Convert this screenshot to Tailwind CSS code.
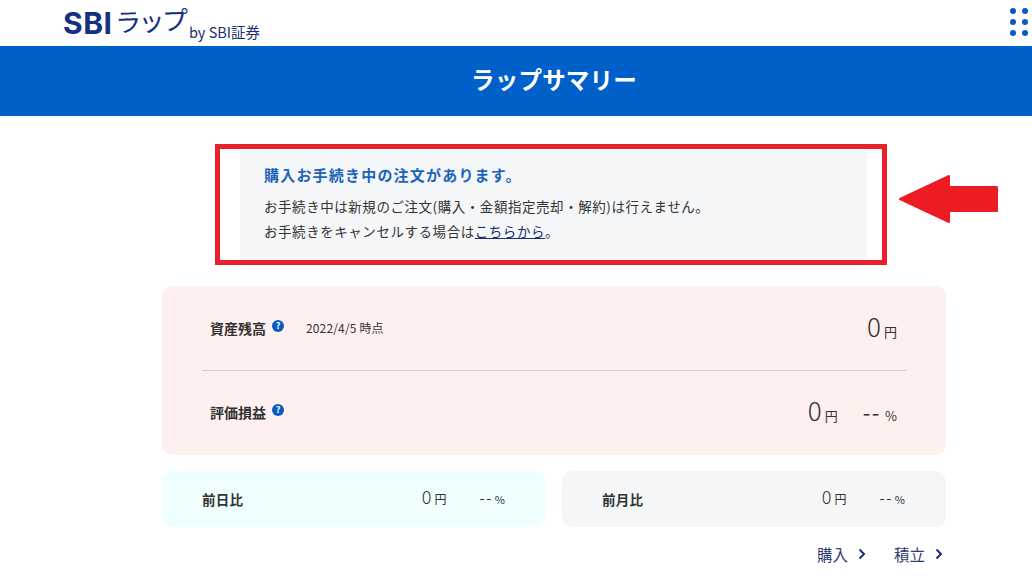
<!DOCTYPE html>
<html lang="ja">
  <head>
    <meta charset="utf-8" />
    <title>ラップサマリー</title>
    <script src="https://cdn.jsdelivr.net/npm/@tailwindcss/browser@4"></script>
  </head>
  <body class="bg-white h-[587px] overflow-hidden relative font-['Noto_Sans_CJK_JP','Noto_Sans',sans-serif] text-[#333]">
    <!-- Header -->
    <header class="h-[46px] flex items-start justify-between pl-[63px] pr-[4px]">
      <div class="flex items-end h-[39px] text-[#14307f]">
        <span class="font-['Inter',sans-serif] font-bold text-[30px] leading-[36px] tracking-[0.5px] mb-[-2px]">SBI</span>
        <span class="text-[26px] leading-[38px] ml-[3px] tracking-[-2.5px] -rotate-2">ラップ</span>
        <span class="text-[14.5px] leading-[16px] ml-[3px] mb-[-1px] text-[#1a2f6e]">by SBI証券</span>
      </div>
      <div class="grid grid-cols-2 gap-x-[6px] gap-y-[5px] pt-[8px]">
        <i class="block w-[6px] h-[6px] rounded-full bg-[#0b5ac4]"></i>
        <i class="block w-[6px] h-[6px] rounded-full bg-[#0b5ac4]"></i>
        <i class="block w-[6px] h-[6px] rounded-full bg-[#0b5ac4]"></i>
        <i class="block w-[6px] h-[6px] rounded-full bg-[#0b5ac4]"></i>
        <i class="block w-[6px] h-[6px] rounded-full bg-[#0b5ac4]"></i>
        <i class="block w-[6px] h-[6px] rounded-full bg-[#0b5ac4]"></i>
      </div>
    </header>

    <!-- Title band -->
    <div class="h-[70px] bg-[#0060ca] flex items-center justify-center pl-[76px]">
      <h1 class="text-white text-[23.5px] font-bold mb-[2px] tracking-[0.2px]">ラップサマリー</h1>
    </div>

    <main class="w-[784px] ml-[162px] pt-[35px]">
      <!-- Notice -->
      <section class="ml-[78px] w-[627px] h-[107px] bg-[#f4f6f8] pl-[24px] pt-[13px]">
        <p class="text-[15px] leading-[22px] font-bold text-[#1c64b8] tracking-[1.2px]">購入お手続き中の注文があります。</p>
        <p class="text-[13.5px] leading-[25px] mt-[8px] tracking-[0.55px]">お手続き中は新規のご注文(購入・金額指定売却・解約)は行えません。</p>
        <p class="text-[13.5px] leading-[25px] tracking-[0.55px]">お手続きをキャンセルする場合は<a class="underline text-[#1b2f6b]">こちらから</a>。</p>
      </section>

      <!-- Balance card -->
      <section class="mt-[28px] h-[169px] bg-[#fff0f0] rounded-[10px] px-[40px]">
        <div class="h-[85px] flex items-center justify-between border-b border-[#dcc8c8]">
          <div class="flex items-center pl-[8px]">
            <span class="text-[14px] font-bold w-[56px]">資産残高</span>
            <svg class="ml-[6px] mb-[5px]" width="12" height="12" viewBox="0 0 12 12"><circle cx="6" cy="6" r="6" fill="#0b5ac4"/><text x="6" y="9.2" font-size="9" font-weight="700" fill="#fff" text-anchor="middle">?</text></svg>
            <span class="text-[12px] ml-[22px] mb-[1px] tracking-[0.15px]">2022/4/5 時点</span>
          </div>
          <div class="flex items-baseline pr-[9px] mb-[4px]">
            <span class="text-[26px] font-light leading-[30px]">0</span>
            <span class="text-[13px] ml-[3px]">円</span>
          </div>
        </div>
        <div class="h-[83px] flex items-center justify-between">
          <div class="flex items-center pl-[8px]">
            <span class="text-[14px] font-bold w-[56px]">評価損益</span>
            <svg class="ml-[6px] mb-[5px]" width="12" height="12" viewBox="0 0 12 12"><circle cx="6" cy="6" r="6" fill="#0b5ac4"/><text x="6" y="9.2" font-size="9" font-weight="700" fill="#fff" text-anchor="middle">?</text></svg>
          </div>
          <div class="flex items-baseline pr-[9px] mb-[3px]">
            <span class="text-[26px] font-light leading-[30px]">0</span>
            <span class="text-[13px] ml-[3px]">円</span>
            <span class="text-[22px] font-normal ml-[25px] tracking-[1.5px]">--</span>
            <span class="text-[13px] ml-[4px]">%</span>
          </div>
        </div>
      </section>

      <!-- Compare cards -->
      <section class="mt-[16px] grid grid-cols-2 gap-[16px]">
        <div class="h-[56px] rounded-[10px] bg-[#effeff] flex items-center justify-between pl-[40px] pr-[41px]">
          <span class="text-[13.5px] font-bold tracking-[0.3px]">前日比</span>
          <div class="flex items-baseline mb-[6px]">
            <span class="text-[18px] font-light">0</span>
            <span class="text-[12px] ml-[3px]">円</span>
            <span class="text-[15px] ml-[33px] tracking-[1.5px]">--</span>
            <span class="text-[11px] ml-[2px]">%</span>
          </div>
        </div>
        <div class="h-[56px] rounded-[10px] bg-[#f4f6f8] flex items-center justify-between pl-[40px] pr-[41px]">
          <span class="text-[13.5px] font-bold tracking-[0.3px]">前月比</span>
          <div class="flex items-baseline mb-[6px]">
            <span class="text-[18px] font-light">0</span>
            <span class="text-[12px] ml-[3px]">円</span>
            <span class="text-[15px] ml-[33px] tracking-[1.5px]">--</span>
            <span class="text-[11px] ml-[2px]">%</span>
          </div>
        </div>
      </section>

      <!-- Links -->
      <nav class="mt-[16px] flex justify-end gap-[28px] pr-[3px] text-[15.5px] leading-[22px] text-[#2c3e70]">
        <a class="flex items-center gap-[10px]">購入
          <svg width="8" height="12" viewBox="0 0 8 12"><path d="M1.5 1.5 6 6l-4.5 4.5" fill="none" stroke="#1b2f6b" stroke-width="2"/></svg>
        </a>
        <a class="flex items-center gap-[10px]">積立
          <svg width="8" height="12" viewBox="0 0 8 12"><path d="M1.5 1.5 6 6l-4.5 4.5" fill="none" stroke="#1b2f6b" stroke-width="2"/></svg>
        </a>
      </nav>
    </main>

    <!-- Red annotation frame and arrow drawn over the page -->
    <div class="absolute left-[215px] top-[144px] w-[672px] h-[121px] border-[5px] border-[#e8202a]"></div>
    <svg class="absolute left-[898px] top-[174px]" width="102" height="50" viewBox="0 0 102 50">
      <path d="M2 25 51 2V13H99V37H51V48Z" fill="#ed1c24" stroke="#ed1c24" stroke-width="2" stroke-linejoin="round"/>
    </svg>
  </body>
</html>
